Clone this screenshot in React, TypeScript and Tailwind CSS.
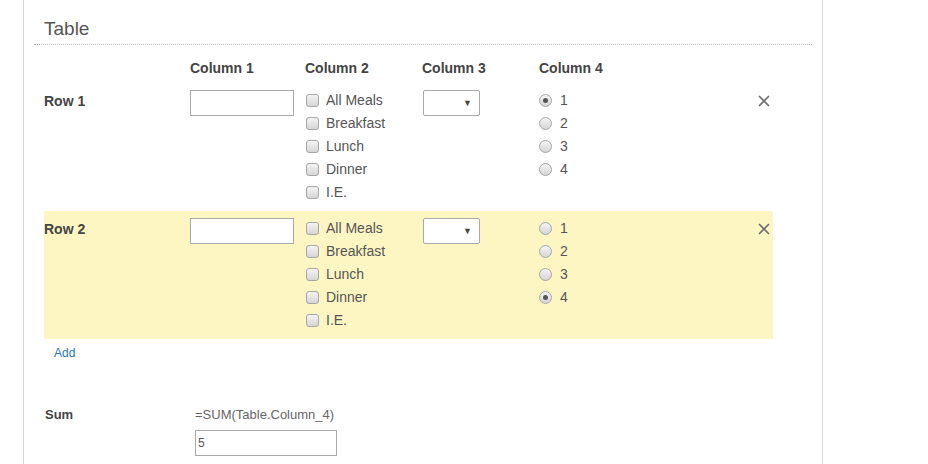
import { useState } from "react";

const meals = ["All Meals", "Breakfast", "Lunch", "Dinner", "I.E."];
const options = ["1", "2", "3", "4"];

function Checkbox({ label }: { label: string }) {
  return (
    <label className="flex h-[23px] items-center gap-[7px]">
      <span className="h-[13px] w-[13px] rounded-[3px] border border-[#a6a6a6] bg-gradient-to-b from-[#f4f4f4] to-[#d6d6d6]" />
      <span>{label}</span>
    </label>
  );
}

function Radio({ label, checked }: { label: string; checked: boolean }) {
  return (
    <label className="flex h-[23px] items-center gap-[8px]">
      <span className="flex h-[13px] w-[13px] items-center justify-center rounded-full border border-[#a6a6a6] bg-gradient-to-b from-[#f4f4f4] to-[#d6d6d6]">
        {checked && <span className="h-[5px] w-[5px] rounded-full bg-[#555]" />}
      </span>
      <span>{label}</span>
    </label>
  );
}

function Row({
  name,
  picked,
  highlight,
}: {
  name: string;
  picked: string;
  highlight?: boolean;
}) {
  return (
    <div
      className={
        "grid h-[128px] grid-cols-[146px_115px_117px_117px_1fr_auto] pt-[6px] " +
        (highlight ? "bg-[#fdf6c2]" : "")
      }
    >
      <div className="mt-[2px] font-bold leading-[20px] text-[#444]">{name}</div>
      <div className="mt-[1px]">
        <input
          type="text"
          className="h-[26px] w-[104px] border border-[#a9a9a9] bg-white px-[3px] outline-none"
        />
      </div>
      <div className="pl-[1px]">
        {meals.map((m) => (
          <Checkbox key={m} label={m} />
        ))}
      </div>
      <div className="mt-[1px] pl-[1px]">
        <div className="flex h-[26px] w-[57px] items-center justify-end rounded-[2px] border border-[#a9a9a9] bg-white pr-[7px]">
          <span className="text-[9px] leading-none text-[#444]">▼</span>
        </div>
      </div>
      <div>
        {options.map((o) => (
          <Radio key={o} label={o} checked={o === picked} />
        ))}
      </div>
      <div className="pr-[3px] pt-[6px]">
        <svg width="12" height="12" viewBox="0 0 12 12">
          <path d="M1 1L11 11M11 1L1 11" stroke="#6f6f6f" strokeWidth="1.7" />
        </svg>
      </div>
    </div>
  );
}

export default function App() {
  const [sum] = useState("5");

  return (
    <div
      className="h-[464px] w-[928px] overflow-hidden bg-white text-[14px] text-[#555]"
      style={{ fontFamily: '"Liberation Sans", Arial, sans-serif' }}
    >
      <div className="ml-[23px] h-full w-[800px] border-x border-[#d4d4d4] px-[10px]">
        {/* Heading */}
        <div className="border-b border-dotted border-[#bdbdbd] pb-[3px] pl-[10px] pt-[17px] text-[19px] leading-[24px] text-[#555]">
          Table
        </div>

        <div className="ml-[10px] w-[729px]">
          {/* Column headers */}
          <div className="mt-[13px] grid h-[20px] grid-cols-[146px_115px_117px_117px_1fr] font-bold leading-[20px] text-[#444]">
            <div />
            <div>Column 1</div>
            <div>Column 2</div>
            <div>Column 3</div>
            <div>Column 4</div>
          </div>

          <div className="mt-[5px]">
            <Row name="Row 1" picked="1" />
            <Row name="Row 2" picked="4" highlight />
          </div>

          <div className="mt-[6px] pl-[10px] text-[12px] leading-[16px] text-[#2a73c0]">
            <a href="#">Add</a>
          </div>

          {/* Sum field */}
          <div className="mt-[45px] grid grid-cols-[151px_1fr]">
            <div className="pl-[1px] text-[13px] font-bold leading-[18px] text-[#444]">Sum</div>
            <div>
              <div className="text-[13px] leading-[18px] text-[#666]">=SUM(Table.Column_4)</div>
              <input
                type="text"
                readOnly
                value={sum}
                className="mt-[6px] h-[26px] w-[142px] border border-[#a9a9a9] bg-white px-[2px] text-[12px] text-[#555] outline-none"
              />
            </div>
          </div>
        </div>
      </div>
    </div>
  );
}
